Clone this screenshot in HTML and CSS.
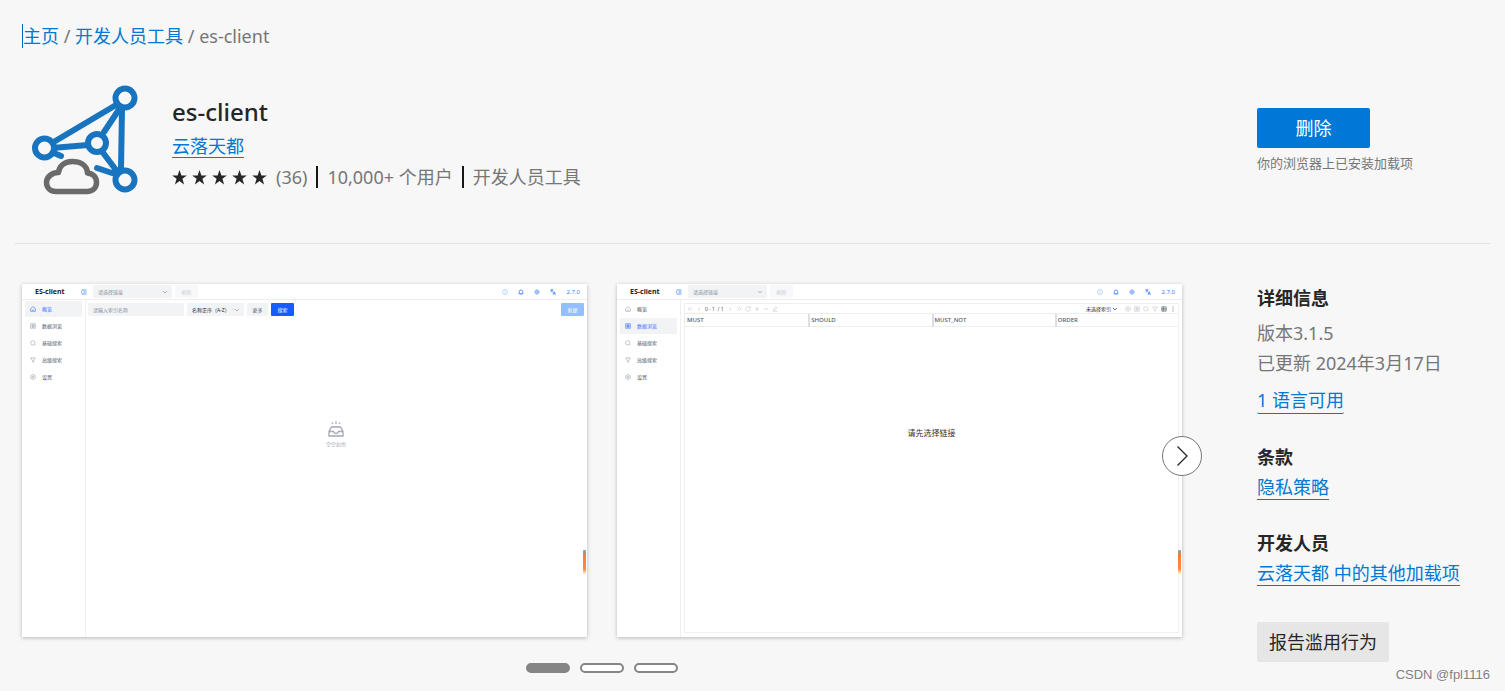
FILE: index.html
```html
<!DOCTYPE html>
<html lang="zh-CN">
<head>
<meta charset="utf-8">
<title>es-client</title>
<meta name="viewport" content="width=device-width, initial-scale=1">
<link rel="stylesheet" href="styles.css">
</head>
<body>
<svg class="defs" aria-hidden="true">
  <symbol id="star" viewBox="0 0 16 16"><path d="M8 0l2 5.8h5.8l-4.7 3.6 1.8 6L8 11.8l-4.9 3.6 1.8-6L.2 5.8H6z" fill="#262626"/></symbol>
  <symbol id="chev" viewBox="0 0 6 6"><path d="M1 2l2 2 2-2" class="ln"/></symbol>
  <symbol id="fold" viewBox="0 0 6 6"><path d="M.5 1h5M2.500 3h3M.5 5h5M.6 2.200v1.600" class="ln bold"/></symbol>
  <symbol id="home" viewBox="0 0 6 6"><path d="M.7 2.600L3 .7l2.300 1.900v2.700H.7zM2 4.200h2" class="ln"/></symbol>
  <symbol id="data" viewBox="0 0 6 6"><path d="M.7.7h1.900v4.600H.7zM3.600.7h1.700v4.600H3.600zM.7 3h4.600" class="ln"/></symbol>
  <symbol id="find" viewBox="0 0 6 6"><circle cx="2.800" cy="2.800" r="2.200" class="ln"/><path d="M4.400 4.400l1.200 1.200" class="ln"/></symbol>
  <symbol id="filter" viewBox="0 0 6 6"><path d="M.6.9h4.800L3.700 3.200v2L2.300 4.500V3.200z" class="ln"/></symbol>
  <symbol id="gear" viewBox="0 0 6 6"><path d="M3 .4l2.200 1.300v2.600L3 5.600.8 4.300V1.700z" class="ln"/><circle cx="3" cy="3" r=".9" class="ln"/></symbol>
  <symbol id="info" viewBox="0 0 6 6"><circle cx="3" cy="3" r="2.500" class="ln"/><path d="M3 1.500v.6M3 2.600v2" class="ln"/></symbol>
  <symbol id="bell" viewBox="0 0 6 6"><path d="M.6 4.700h4.800M1.300 4.600V2.700a1.700 1.700 0 0 1 3.400 0v1.900M2.500 5.500h1" class="ln bold"/></symbol>
  <symbol id="sun" viewBox="0 0 6 6"><circle cx="3" cy="3" r="1.300" class="ln bold"/><path d="M3 .2v.8M3 5v.8M.2 3H1M5 3h.8M1 1l.6.6M4.400 4.400l.6.6M1 5l.6-.6M4.400 1.600L5 1" class="ln bold"/></symbol>
  <symbol id="lang" viewBox="0 0 6 6"><path d="M.3.900h3M1.800.3v.6M.6 3L2.800 1M1 1.600l1.900 1.500M3 5.600l1.200-2.900 1.300 2.900M3.400 4.800h1.700" class="ln bold"/></symbol>
  <symbol id="prev" viewBox="0 0 6 6"><path d="M3.800 1.200L2 3l1.800 1.800" class="ln"/></symbol>
  <symbol id="next" viewBox="0 0 6 6"><path d="M2.200 1.200L4 3 2.200 4.800" class="ln"/></symbol>
  <symbol id="first" viewBox="0 0 6 6"><path d="M2.800 1.200L1 3l1.800 1.800M5 1.200L3.200 3 5 4.800" class="ln"/></symbol>
  <symbol id="last" viewBox="0 0 6 6"><path d="M1 1.200L2.800 3 1 4.800M3.200 1.200L5 3 3.200 4.800" class="ln"/></symbol>
  <symbol id="reload" viewBox="0 0 6 6"><path d="M5 1.800A2.300 2.300 0 1 0 5.200 3.600M5.100.6v1.400H3.700" class="ln"/></symbol>
  <symbol id="plus" viewBox="0 0 6 6"><path d="M1 3h4M3 1v4" class="ln"/></symbol>
  <symbol id="minus" viewBox="0 0 6 6"><path d="M1 3h4" class="ln"/></symbol>
  <symbol id="edit" viewBox="0 0 6 6"><path d="M.8 5.300h4.600M1.500 4.200V3.100L3.900.8l1 1-2.300 2.400z" class="ln"/></symbol>
  <symbol id="grid" viewBox="0 0 6 6"><path d="M.8.8h4.400v4.400H.8zM.8 2.400h4.400M.8 3.800h4.400M2.400.8v4.400" class="ln"/></symbol>
  <symbol id="more" viewBox="0 0 6 6"><path d="M3 .6v.9M3 2.600v.9M3 4.600v.9" class="ln bold"/></symbol>
</svg>

<div class="page">
  <nav class="crumbs" aria-label="导航路径"><a class="focus" href="#">主页</a> / <a href="#">开发人员工具</a> / <span>es-client</span></nav>

  <header class="hero columns">
    <div class="product">
      <svg class="logo" viewBox="0 0 106 111" aria-label="es-client" role="img">
        <g fill="none" stroke="#1874bf" stroke-width="6" stroke-linecap="round">
          <path d="M20 58L84 20M88 23L72 47M90 24L89 84M20 63l36-3M69 65l15 20M65 83l18 6M22 68l7 3"/>
          <circle cx="93" cy="13" r="9.500" fill="#f7f7f7"/><circle cx="12.500" cy="63" r="9.500" fill="#f7f7f7"/>
          <circle cx="65" cy="58" r="9" fill="#f7f7f7"/><circle cx="93" cy="95" r="9.500" fill="#f7f7f7"/>
        </g>
        <path d="M24 106.500h31c6 0 9.500-4 9.500-9 0-6-4-9-9-9.500C55 80 48 76.500 40 76.500c-8 0-13 5-13.500 11-6 0-12 4-12 10 0 5.500 4 9 9.500 9z" fill="#f7f7f7" stroke="#6a6a6a" stroke-width="5.500" stroke-linejoin="round"/>
      </svg>
      <div class="summary">
        <h1>es-client</h1>
        <a class="under" href="#">云落天都</a>
        <div class="facts">
          <span class="rating"><span class="stars"><svg><use href="#star"/></svg><svg><use href="#star"/></svg><svg><use href="#star"/></svg><svg><use href="#star"/></svg><svg><use href="#star"/></svg></span>(36)</span>
          <span>10,000+ 个用户</span>
          <span>开发人员工具</span>
        </div>
      </div>
    </div>
    <div class="action">
      <button class="remove" type="button">删除</button>
      <p>你的浏览器上已安装加载项</p>
    </div>
  </header>

  <main class="columns content">
    <section class="gallery" aria-label="屏幕截图">
      <div class="slides">
        <article class="shot">
          <div class="bar">
            <strong>ES-client</strong><svg class="i blue"><use href="#fold"/></svg>
            <span class="pick wide"><select aria-label="链接"><option>请选择链接</option></select><svg class="i"><use href="#chev"/></svg></span>
            <button class="faint" type="button" disabled>刷新</button>
            <div class="tools"><svg class="i pale"><use href="#info"/></svg><svg class="i"><use href="#bell"/></svg><svg class="i"><use href="#sun"/></svg><svg class="i"><use href="#lang"/></svg><span>2.7.0</span></div>
          </div>
          <div class="work">
            <ul class="menu">
              <li class="on"><svg class="i"><use href="#home"/></svg>概览</li>
              <li><svg class="i"><use href="#data"/></svg>数据浏览</li>
              <li><svg class="i"><use href="#find"/></svg>基础搜索</li>
              <li><svg class="i"><use href="#filter"/></svg>高级搜索</li>
              <li><svg class="i"><use href="#gear"/></svg>设置</li>
            </ul>
            <div class="pane">
              <div class="query">
                <input type="text" aria-label="索引名称" placeholder="请输入索引名称">
                <span class="pick sort"><select aria-label="排序"><option>名称正序（A-Z）</option></select><svg class="i"><use href="#chev"/></svg></span>
                <button class="extra" type="button">更多</button>
                <button class="primary" type="button">搜索</button>
                <button class="new" type="button">新建</button>
              </div>
              <div class="empty">
                <svg viewBox="0 0 16 16"><path d="M3.500 6h9L15 10.500V15H1v-4.500zM1 10.500h4.500q.5 2 2.500 2t2.500-2H15M8 .5V3M4 1.500l1 1.500M12 1.500L11 3" fill="none" stroke="#a3a8b3" stroke-width="1.300"/></svg>
                <span>空空如也</span>
              </div>
            </div>
          </div>
          <i class="mark"></i>
        </article>

        <article class="shot">
          <div class="bar">
            <strong>ES-client</strong><svg class="i blue"><use href="#fold"/></svg>
            <span class="pick wide"><select aria-label="链接"><option>请选择链接</option></select><svg class="i"><use href="#chev"/></svg></span>
            <button class="faint" type="button" disabled>刷新</button>
            <div class="tools"><svg class="i pale"><use href="#info"/></svg><svg class="i"><use href="#bell"/></svg><svg class="i"><use href="#sun"/></svg><svg class="i"><use href="#lang"/></svg><span>2.7.0</span></div>
          </div>
          <div class="work">
            <ul class="menu">
              <li><svg class="i"><use href="#home"/></svg>概览</li>
              <li class="on"><svg class="i"><use href="#data"/></svg>数据浏览</li>
              <li><svg class="i"><use href="#find"/></svg>基础搜索</li>
              <li><svg class="i"><use href="#filter"/></svg>高级搜索</li>
              <li><svg class="i"><use href="#gear"/></svg>设置</li>
            </ul>
            <div class="pane">
              <div class="frame">
                <div class="pager">
                  <svg class="i"><use href="#first"/></svg><svg class="i"><use href="#prev"/></svg><span class="dark">0 - 1 &nbsp;/ 1</span><svg class="i"><use href="#next"/></svg><svg class="i"><use href="#last"/></svg><svg class="i"><use href="#reload"/></svg><svg class="i"><use href="#plus"/></svg><svg class="i"><use href="#minus"/></svg><svg class="i"><use href="#edit"/></svg>
                  <span class="dark index">未选择索引<svg class="i"><use href="#chev"/></svg></span>
                  <svg class="i"><use href="#gear"/></svg><svg class="i"><use href="#data"/></svg><svg class="i"><use href="#find"/></svg><svg class="i"><use href="#filter"/></svg><svg class="i dark"><use href="#grid"/></svg><svg class="i dark"><use href="#more"/></svg>
                </div>
                <div class="heads"><span>MUST</span><span>SHOULD</span><span>MUST_NOT</span><span>ORDER</span></div>
                <p class="hint">请先选择链接</p>
              </div>
            </div>
          </div>
          <i class="mark"></i>
        </article>
        <button class="forward" type="button" aria-label="下一张"><svg viewBox="0 0 20 20"><path d="M5.500 .5l9.500 9.500-9.500 9.500" fill="none" stroke="#262626" stroke-width="1.300"/></svg></button>
      </div>
      <div class="dots"><button class="now" type="button" aria-label="第 1 页"></button><button type="button" aria-label="第 2 页"></button><button type="button" aria-label="第 3 页"></button></div>
    </section>

    <aside class="details">
      <section><h2>详细信息</h2>
        <p class="gap">版本3.1.5</p>
        <p>已更新 2024年3月17日</p>
        <button class="languages" type="button">1 语言可用</button>
      </section>
      <section><h2>条款</h2><a class="under" href="#">隐私策略</a></section>
      <section><h2>开发人员</h2><a class="under" href="#">云落天都 中的其他加载项</a></section>
      <button class="report" type="button">报告滥用行为</button>
    </aside>
  </main>
  <div class="credit">CSDN @fpl1116</div>
</div>
</body>
</html>
```
FILE: styles.css
```css
* { box-sizing: border-box; }
body {
  margin: 0;
  background: #f7f7f7;
  color: #767676;
  font: 18px/24px "Noto Sans", "Noto Sans CJK SC", sans-serif;
}
h1, h2, p, ul { margin: 0; padding: 0; }
a { color: #0078d4; text-decoration: none; }
button, input, select { margin: 0; padding: 0; border: 0; font: inherit; color: inherit; }
.defs { display: none; }
.page { position: relative; padding: 24px 15px 18px; }
.crumbs { padding: 0 7px; }
.focus { display: inline-block; border-left: 1px solid #0067b8; }

.columns {
  display: grid;
  grid-template-columns: minmax(0, 1fr) 233px;
  column-gap: 75px;
  padding: 0 0 0 7px;
}
.hero { padding-top: 36px; padding-bottom: 47px; border-bottom: 1px solid #e1e1e1; }
.product { display: flex; gap: 34px; padding-left: 10px; }
.logo { width: 106px; height: 111px; margin-top: 1px; flex: none; }
.summary { padding-top: 12px; }
h1 { color: #262626; font-size: 24px; line-height: 32px; font-weight: 500; }
.under { display: inline-block; line-height: 22px; border-bottom: 1px solid #0078d4; }
.summary .under { margin-top: 7px; }
.facts { display: flex; align-items: center; margin-top: 8px; line-height: 22px; }
.facts > span + span { margin-left: 9px; padding-left: 9px; border-left: 2px solid #171717; }
.rating { display: flex; align-items: center; gap: 9px; }
.stars { display: flex; gap: 5px; }
.stars svg { width: 15px; height: 15px; }
.action { padding-top: 24px; }
.remove { width: 113px; height: 40px; border-radius: 2px; background: #0078d7; color: #fff; }
.action p { margin-top: 4px; font-size: 13px; line-height: 22px; }

.content { padding-top: 40px; }
.slides { position: relative; display: grid; grid-template-columns: 1fr 1fr; gap: 30px; }
.shot {
  position: relative;
  display: flex;
  flex-direction: column;
  aspect-ratio: 565 / 353;
  background: #fff;
  box-shadow: 0 1px 4px #0004;
  color: #4e5969;
  font-size: 5px;
  line-height: 8px;
}
.i { width: 6px; height: 6px; flex: none; color: inherit; }
.ln { fill: none; stroke: currentColor; stroke-width: .6; }
.bold { stroke-width: .8; }
.bar { display: flex; align-items: center; height: 16px; border-bottom: 1px solid #eee; padding: 0 7px 0 13px; }
.bar strong { width: 46px; color: #1d2129; font-size: 7px; font-weight: 700; }
.blue, .tools { color: #3c7eff; }
.pick { position: relative; display: flex; align-items: center; }
.pick select { width: 100%; height: 13px; padding: 0 5px; appearance: none; background: #f2f3f5; border-radius: 1px; }
.pick .i { position: absolute; right: 4px; }
.wide { width: 79px; margin-left: 6px; color: #86909c; }
.shot button { height: 13px; width: 23px; background: #f2f3f5; border-radius: 1px; }
.shot .faint { margin-left: 3px; background: #f7f8fa; color: #c9cdd4; }
.tools { display: flex; align-items: center; gap: 10px; margin-left: auto; }
.tools span { font-size: 6px; }
.tools .pale { color: #94bfff; }
.work { display: flex; flex: 1; }
.menu { width: 64px; padding: 1px 3px; border-right: 1px solid #f0f0f0; list-style: none; }
.menu li { display: flex; align-items: center; gap: 6px; height: 16px; margin-bottom: 1px; padding-left: 5px; border-radius: 1px; }
.menu .i { color: #9aa2ad; }
.menu .on, .menu .on .i { background: #f2f3f5; color: #3c6fff; }
.pane { display: flex; flex-direction: column; flex: 1; padding: 3px 3px 4px 2px; }
.query { display: flex; gap: 3px; }
.query input { width: 96px; height: 13px; padding: 0 5px; background: #f2f3f5; }
.query input::placeholder { color: #86909c; opacity: 1; }
.sort { width: 57px; color: #1d2129; }
.sort .i { color: #86909c; }
.shot .extra { width: 21px; }
.shot .primary { background: #165dff; color: #fff; }
.shot .new { margin-left: auto; background: #94bfff; color: #fff; }
.empty { display: flex; flex-direction: column; align-items: center; padding-top: 105px; color: #a3a8b3; }
.empty svg { width: 16px; height: 16px; margin-bottom: 3px; }
.mark { position: absolute; right: 1px; top: 266px; width: 3px; height: 25px; border-radius: 1px; background: linear-gradient(#999 3px, #ff7d2b 4px, #ff8b3d 19px, #ffd08a 22px, #fff); }
.frame { flex: 1; border: 1px solid #f0f0f0; margin-left: -4px; }
.shot:nth-child(2) .pane { padding-left: 7px; }
.pager { display: flex; align-items: center; gap: 3px; height: 10px; padding: 0 2px; border-bottom: 1px solid #eee; color: #c2c7cf; }
.pager .dark { color: #4e5969; }
.pager .index { display: flex; align-items: center; margin-left: auto; margin-right: 4px; gap: 1px; color: #1d2129; }
.heads { display: grid; grid-template-columns: repeat(4, 1fr); height: 13px; border-bottom: 1px solid #eee; font-size: 6px; line-height: 13px; font-weight: 500; }
.heads span { padding-left: 2px; }
.heads span + span { padding-left: 1px; border-left: 2px solid #dcdee5; }
.hint { padding-top: 100px; text-align: center; color: #333; font-size: 8px; line-height: 12px; }
.slides .forward { position: absolute; right: -20px; top: calc(50% - 25px); width: 40px; height: 40px; display: grid; place-items: center; border: 1px solid #767676; border-radius: 50%; background: #fff; }
.forward svg { width: 20px; height: 20px; }
.dots { display: flex; justify-content: center; gap: 10px; margin-top: 26px; }
.dots button { width: 44px; height: 10px; border: 2px solid #858585; border-radius: 5px; background: #fff; }
.dots .now { background: #858585; }

.details { margin-top: -1px; line-height: 30px; }
.details section { margin-bottom: 28px; }
h2 { color: #262626; font-size: 18px; line-height: 30px; font-weight: 700; }
.gap { margin-top: 5px; }
.details .under { display: table; line-height: 24px; margin-top: 3px; }
.languages { display: block; margin-top: 10px; padding-bottom: 1px; line-height: 24px; background: none; }
.details .languages { color: #0078d4; border-bottom: 1px solid #0078d4; border-radius: 2px; }
.report { height: 40px; margin-top: 8px; padding: 0 12px; border-radius: 2px; background: #e6e6e6; line-height: 24px; }
.details .report { color: #262626; }
.credit { position: absolute; right: 15px; bottom: 6px; color: #808080; font: 13px/20px "Liberation Sans", sans-serif; text-shadow: 1px 1px 0 #fff; }
```
